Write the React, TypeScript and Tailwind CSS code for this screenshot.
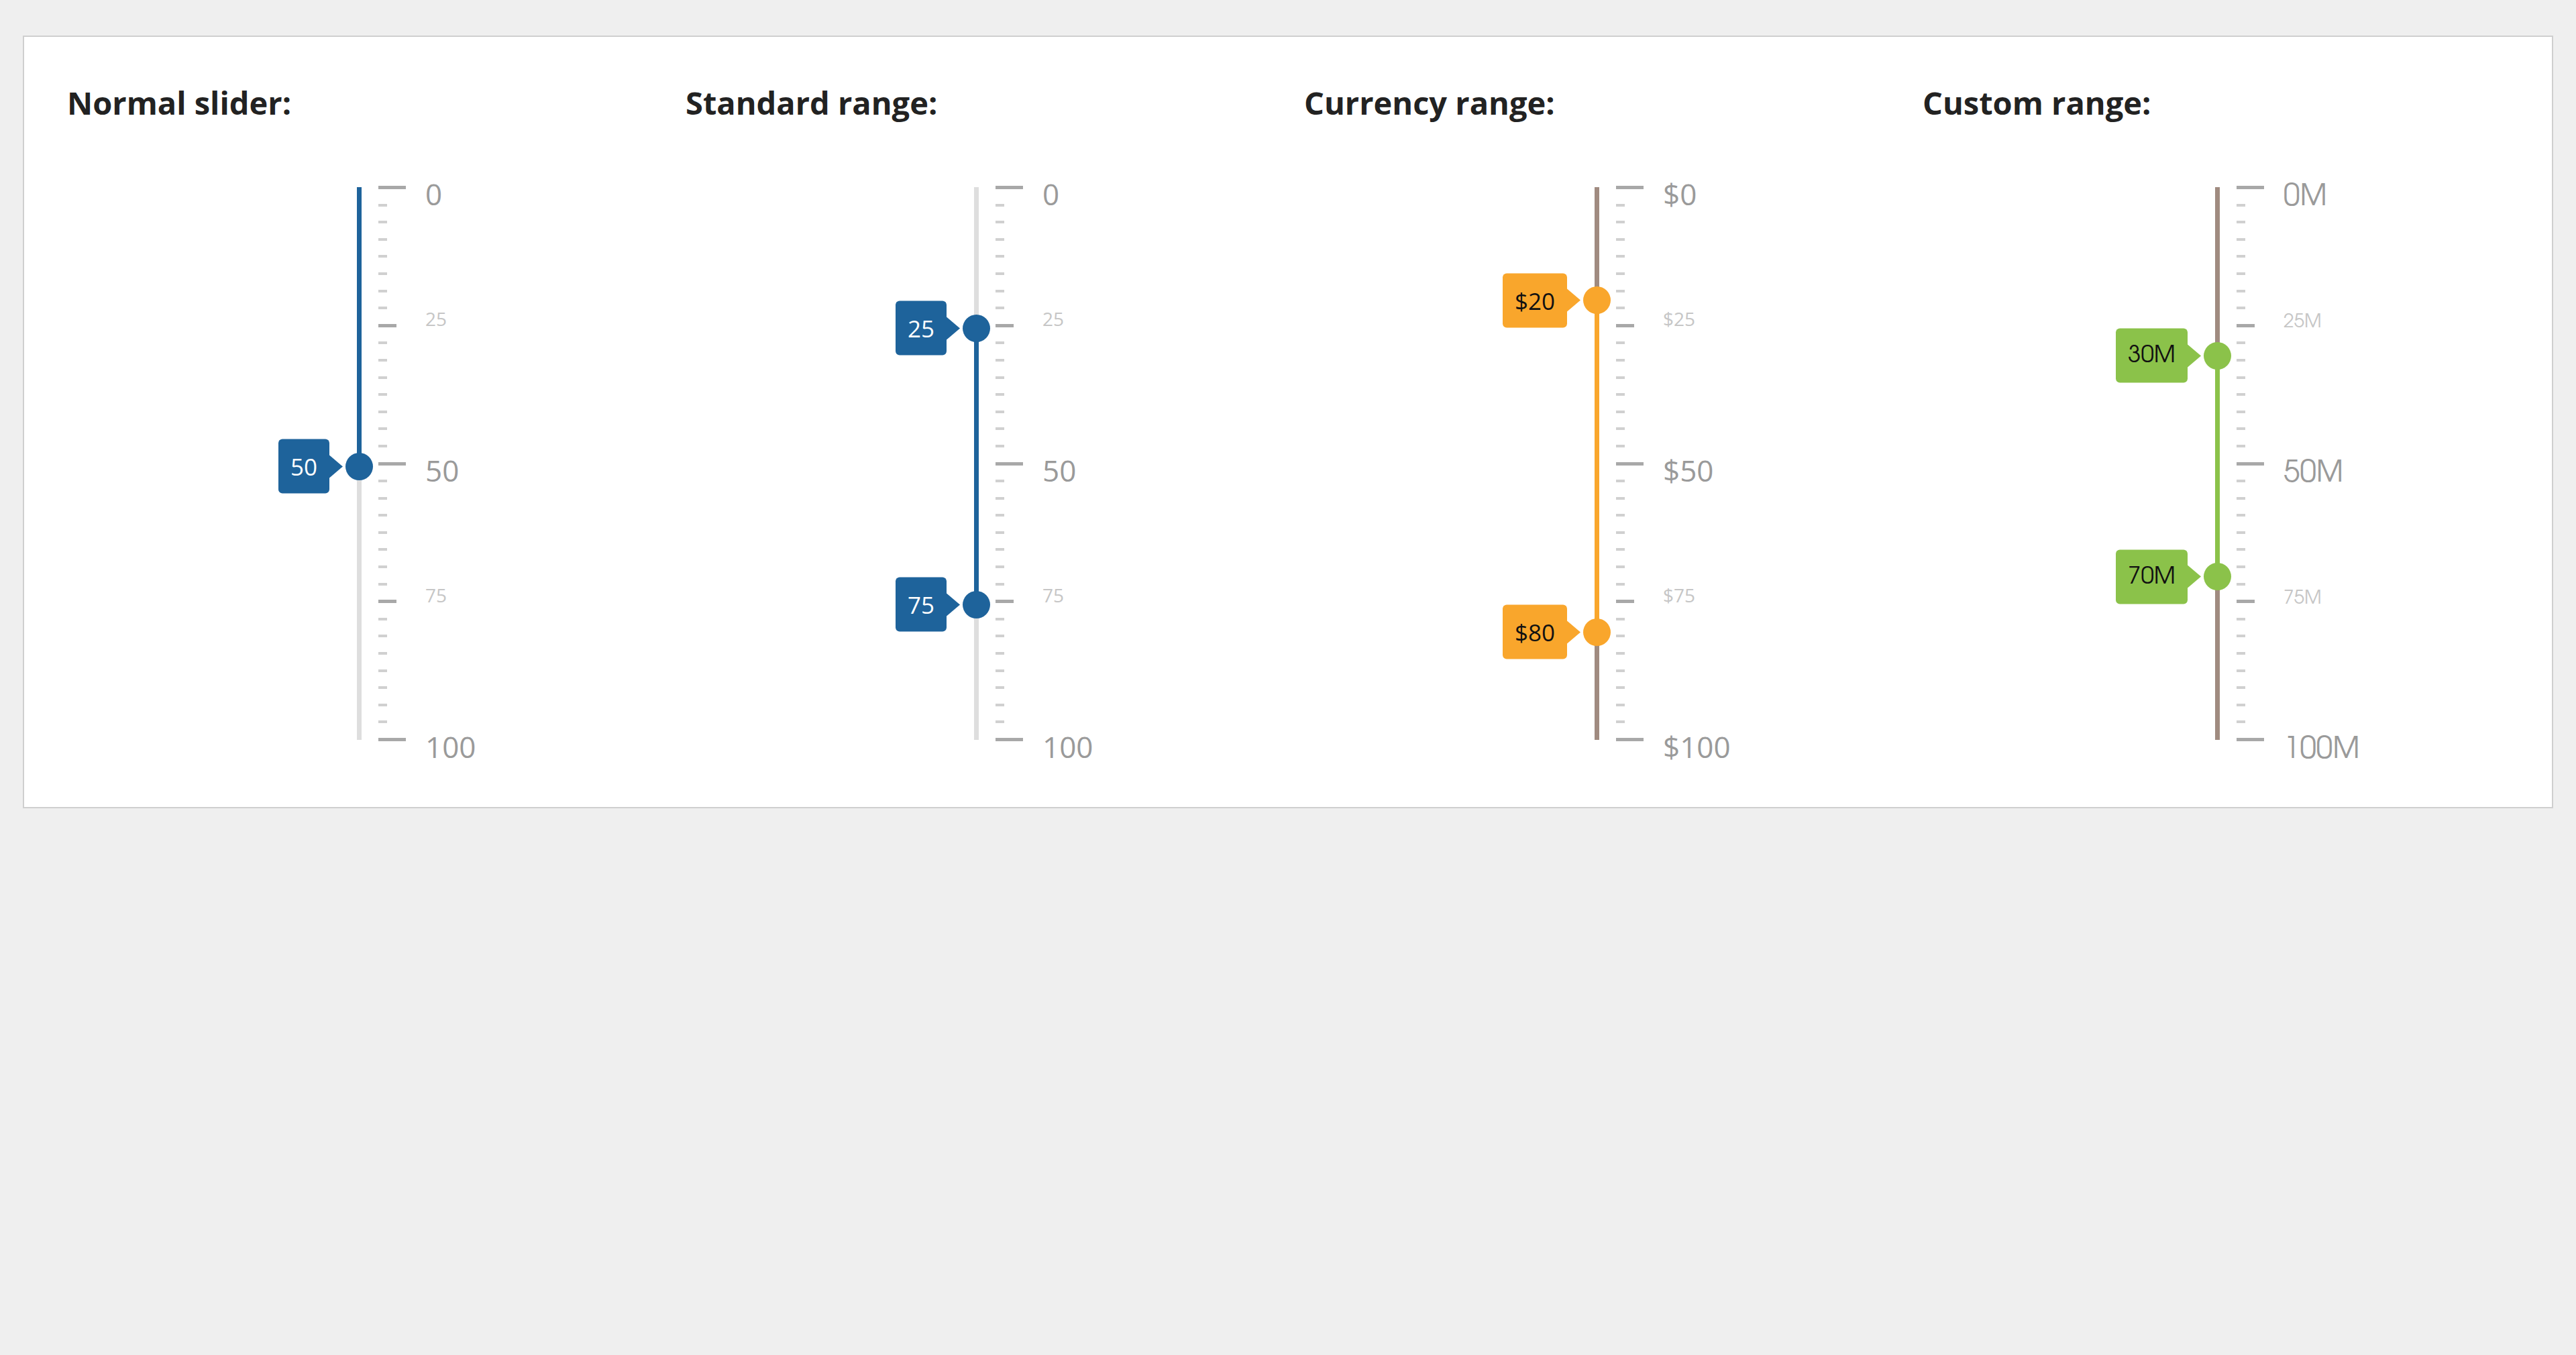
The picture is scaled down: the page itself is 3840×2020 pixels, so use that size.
import React from "react";

// Vertical slider showcase: four demo sliders laid out side by side

type SliderDemo = {
  title: string;
  values: number[];
  fill: string;
  rest: string;
  labelText: string;
  offset: string;
  font: string;
  scaleShift: string;
  format: (v: number) => string;
};

const SCALE = 8.24; // px per unit, 0..100 on an 824px track

const sliders: SliderDemo[] = [
  {
    title: "Normal slider:",
    values: [50],
    fill: "bg-[#1e639b]",
    rest: "bg-[#dedede]",
    labelText: "text-white",
    offset: "ml-[432px]",
    font: "font-['Open_Sans',sans-serif]",
    scaleShift: "mt-0",
    format: (v) => `${v}`,
  },
  {
    title: "Standard range:",
    values: [25, 75],
    fill: "bg-[#1e639b]",
    rest: "bg-[#dedede]",
    labelText: "text-white",
    offset: "ml-[430px]",
    font: "font-['Open_Sans',sans-serif]",
    scaleShift: "mt-0",
    format: (v) => `${v}`,
  },
  {
    title: "Currency range:",
    values: [20, 80],
    fill: "bg-[#f9a62c]",
    rest: "bg-[#a08b80]",
    labelText: "text-[#111]",
    offset: "ml-[433px]",
    font: "font-['Open_Sans',sans-serif]",
    scaleShift: "mt-0",
    format: (v) => `$${v}`,
  },
  {
    title: "Custom range:",
    values: [30, 70],
    fill: "bg-[#8bc24a]",
    rest: "bg-[#a08b80]",
    labelText: "text-[#111]",
    offset: "ml-[436px]",
    font: "font-['Century_Gothic','URW_Gothic','TeX_Gyre_Adventor',Lato,sans-serif]",
    scaleShift: "mt-[5px]",
    format: (v) => `${v}M`,
  },
];

const arrowColor: Record<string, string> = {
  "bg-[#1e639b]": "border-l-[#1e639b]",
  "bg-[#f9a62c]": "border-l-[#f9a62c]",
  "bg-[#8bc24a]": "border-l-[#8bc24a]",
};

function Ticks() {
  const ticks = Array.from({ length: 33 }, (_, i) => i);
  return (
    <div className="ml-[25px] -mt-[2px] flex h-[828px] flex-col justify-between">
      {ticks.map((i) => {
        if (i % 16 === 0) return <div key={i} className="h-[5px] w-[41px] bg-[#a8a8a8]" />;
        if (i % 8 === 0) return <div key={i} className="h-[5px] w-[27px] bg-[#a8a8a8]" />;
        return <div key={i} className="h-[4px] w-[13px] bg-[#d0d0d0]" />;
      })}
    </div>
  );
}

function ScaleLabels({ s }: { s: SliderDemo }) {
  return (
    <div className={`relative ml-[29px] w-[140px] ${s.scaleShift} ${s.font}`}>
      <span className="absolute left-0 top-[-12px] text-[44px] leading-none text-[#9a9a9a]">{s.format(0)}</span>
      <span className="absolute left-0 top-[182px] text-[28px] leading-none text-[#c6c6c6]">{s.format(25)}</span>
      <span className="absolute left-0 top-[400px] text-[44px] leading-none text-[#9a9a9a]">{s.format(50)}</span>
      <span className="absolute left-0 top-[594px] text-[28px] leading-none text-[#c6c6c6]">{s.format(75)}</span>
      <span className="absolute left-0 top-[812px] text-[44px] leading-none text-[#9a9a9a]">{s.format(100)}</span>
    </div>
  );
}

function Slider({ s }: { s: SliderDemo }) {
  const from = s.values.length > 1 ? s.values[0] : 0;
  const to = s.values[s.values.length - 1];
  return (
    <div className={`mt-[93px] flex ${s.offset}`}>
      <div className={`relative h-[824px] w-[7px] ${s.rest}`}>
        <div
          className={`absolute left-0 w-full ${s.fill}`}
          style={{ top: from * SCALE, height: (to - from) * SCALE + 4 }}
        />
        {s.values.map((v) => (
          <div
            key={v}
            className="absolute left-[-17px] h-[41px] w-[41px]"
            style={{ top: v * SCALE - 16.5 }}
          >
            <div className={`h-full w-full rounded-full ${s.fill}`} />
            <div className="absolute right-[calc(100%+4px)] top-1/2 flex -translate-y-1/2 items-center">
              <div
                className={`flex h-[81px] items-center rounded-[6px] px-[18px] text-[35px] leading-none ${s.fill} ${s.labelText} ${s.font}`}
              >
                {s.format(v)}
              </div>
              <div className={`h-0 w-0 border-y-[17px] border-l-[20px] border-y-transparent ${arrowColor[s.fill]}`} />
            </div>
          </div>
        ))}
      </div>
      <Ticks />
      <ScaleLabels s={s} />
    </div>
  );
}

export default function App() {
  return (
    <div className="min-h-[2020px] w-full bg-[#efefef] px-[34px] pt-[53px] font-['Open_Sans',sans-serif]">
      <div className="grid h-[1152px] grid-cols-4 border-2 border-[#cfcfcf] bg-white pl-[64px] pr-[16px] pt-[66px]">
        {sliders.map((s) => (
          <div key={s.title} className="flex flex-col">
            <h2 className="h-[65px] text-[47px] font-bold leading-[65px] text-[#222]">{s.title}</h2>
            <Slider s={s} />
          </div>
        ))}
      </div>
    </div>
  );
}
